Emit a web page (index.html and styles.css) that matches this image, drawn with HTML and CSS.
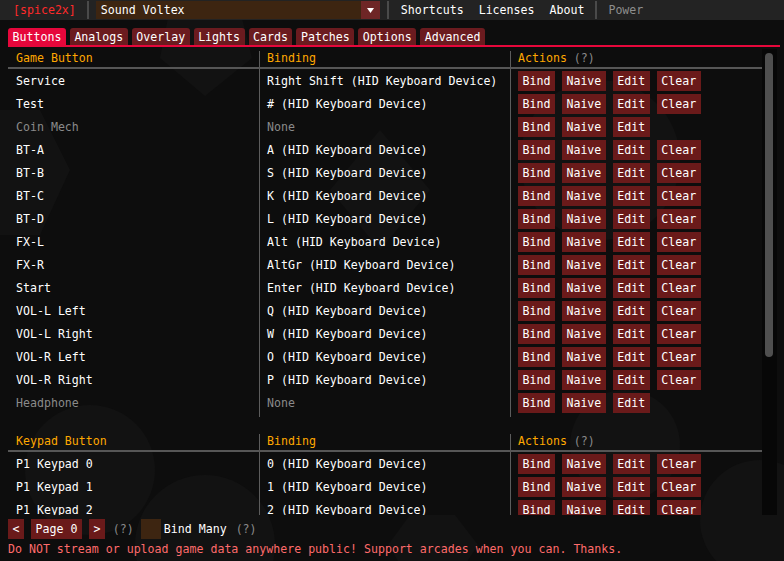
FILE: index.html
```html
<!DOCTYPE html>
<html>
<head>
<meta charset="utf-8">
<link rel="stylesheet" href="styles.css">
</head>
<body>
<svg class="backdrop" width="784" height="561" viewBox="0 0 784 561" aria-hidden="true">
  <polygon points="168,18 242,18 252,58 205,96 160,58" />
  <polygon points="-20,110 40,110 70,170 40,235 -20,235" />
  <polygon points="380,130 430,190 380,250 330,190" />
  <circle cx="600" cy="160" r="80" />
  <circle cx="90" cy="470" r="65" />
  <circle cx="205" cy="545" r="70" />
  <polygon points="410,515 455,515 478,545 455,580 410,580 388,545" />
  <circle cx="625" cy="445" r="55" />
  <circle cx="760" cy="520" r="60" />
</svg>

<div class="app">
  <div class="menubar">
    <span class="brand">[spice2x]</span>
    <span class="msep"></span>
    <div class="combo">
      <span class="combo-text">Sound Voltex</span>
      <span class="combo-arrow"><svg width="7" height="5" viewBox="0 0 7 5"><polygon points="0,0 7,0 3.5,5" fill="#fff"/></svg></span>
    </div>
    <span class="msep sep-right"></span>
    <span class="mitem first">Shortcuts</span>
    <span class="mitem">Licenses</span>
    <span class="mitem">About</span>
    <span class="msep sep-power"></span>
    <span class="mitem dim">Power</span>
  </div>

  <div class="tabs">
    <span class="tab active">Buttons</span>
    <span class="tab">Analogs</span>
    <span class="tab">Overlay</span>
    <span class="tab">Lights</span>
    <span class="tab">Cards</span>
    <span class="tab">Patches</span>
    <span class="tab">Options</span>
    <span class="tab">Advanced</span>
  </div>
  <div class="tabline"></div>

  <div class="scroll-area">
    <div class="scroll-content">
      <div class="table">
        <div class="hcell">Game Button</div>
        <div class="hcell">Binding</div>
        <div class="hcell">Actions <span class="dim">(?)</span></div>

        <div class="cell">Service</div><div class="cell">Right Shift (HID Keyboard Device)</div>
        <div class="cell acts"><span class="btn">Bind</span><span class="btn">Naive</span><span class="btn">Edit</span><span class="btn">Clear</span></div>

        <div class="cell">Test</div><div class="cell"># (HID Keyboard Device)</div>
        <div class="cell acts"><span class="btn">Bind</span><span class="btn">Naive</span><span class="btn">Edit</span><span class="btn">Clear</span></div>

        <div class="cell dim">Coin Mech</div><div class="cell dim">None</div>
        <div class="cell acts"><span class="btn">Bind</span><span class="btn">Naive</span><span class="btn">Edit</span></div>

        <div class="cell">BT-A</div><div class="cell">A (HID Keyboard Device)</div>
        <div class="cell acts"><span class="btn">Bind</span><span class="btn">Naive</span><span class="btn">Edit</span><span class="btn">Clear</span></div>

        <div class="cell">BT-B</div><div class="cell">S (HID Keyboard Device)</div>
        <div class="cell acts"><span class="btn">Bind</span><span class="btn">Naive</span><span class="btn">Edit</span><span class="btn">Clear</span></div>

        <div class="cell">BT-C</div><div class="cell">K (HID Keyboard Device)</div>
        <div class="cell acts"><span class="btn">Bind</span><span class="btn">Naive</span><span class="btn">Edit</span><span class="btn">Clear</span></div>

        <div class="cell">BT-D</div><div class="cell">L (HID Keyboard Device)</div>
        <div class="cell acts"><span class="btn">Bind</span><span class="btn">Naive</span><span class="btn">Edit</span><span class="btn">Clear</span></div>

        <div class="cell">FX-L</div><div class="cell">Alt (HID Keyboard Device)</div>
        <div class="cell acts"><span class="btn">Bind</span><span class="btn">Naive</span><span class="btn">Edit</span><span class="btn">Clear</span></div>

        <div class="cell">FX-R</div><div class="cell">AltGr (HID Keyboard Device)</div>
        <div class="cell acts"><span class="btn">Bind</span><span class="btn">Naive</span><span class="btn">Edit</span><span class="btn">Clear</span></div>

        <div class="cell">Start</div><div class="cell">Enter (HID Keyboard Device)</div>
        <div class="cell acts"><span class="btn">Bind</span><span class="btn">Naive</span><span class="btn">Edit</span><span class="btn">Clear</span></div>

        <div class="cell">VOL-L Left</div><div class="cell">Q (HID Keyboard Device)</div>
        <div class="cell acts"><span class="btn">Bind</span><span class="btn">Naive</span><span class="btn">Edit</span><span class="btn">Clear</span></div>

        <div class="cell">VOL-L Right</div><div class="cell">W (HID Keyboard Device)</div>
        <div class="cell acts"><span class="btn">Bind</span><span class="btn">Naive</span><span class="btn">Edit</span><span class="btn">Clear</span></div>

        <div class="cell">VOL-R Left</div><div class="cell">O (HID Keyboard Device)</div>
        <div class="cell acts"><span class="btn">Bind</span><span class="btn">Naive</span><span class="btn">Edit</span><span class="btn">Clear</span></div>

        <div class="cell">VOL-R Right</div><div class="cell">P (HID Keyboard Device)</div>
        <div class="cell acts"><span class="btn">Bind</span><span class="btn">Naive</span><span class="btn">Edit</span><span class="btn">Clear</span></div>

        <div class="cell dim">Headphone</div><div class="cell dim">None</div>
        <div class="cell acts"><span class="btn">Bind</span><span class="btn">Naive</span><span class="btn">Edit</span></div>
      </div>

      <div class="table">
        <div class="hcell">Keypad Button</div>
        <div class="hcell">Binding</div>
        <div class="hcell">Actions <span class="dim">(?)</span></div>

        <div class="cell">P1 Keypad 0</div><div class="cell">0 (HID Keyboard Device)</div>
        <div class="cell acts"><span class="btn">Bind</span><span class="btn">Naive</span><span class="btn">Edit</span><span class="btn">Clear</span></div>

        <div class="cell">P1 Keypad 1</div><div class="cell">1 (HID Keyboard Device)</div>
        <div class="cell acts"><span class="btn">Bind</span><span class="btn">Naive</span><span class="btn">Edit</span><span class="btn">Clear</span></div>

        <div class="cell">P1 Keypad 2</div><div class="cell">2 (HID Keyboard Device)</div>
        <div class="cell acts"><span class="btn">Bind</span><span class="btn">Naive</span><span class="btn">Edit</span><span class="btn">Clear</span></div>
      </div>
    </div>
    <div class="scrollbar"><div class="thumb"></div></div>
  </div>

  <div class="pager">
    <span class="btn">&lt;</span>
    <span class="btn">Page 0</span>
    <span class="btn">&gt;</span>
    <span class="dim help">(?)</span>
    <span class="checkbox"></span>
    <span class="cb-label">Bind Many</span>
    <span class="dim help2">(?)</span>
  </div>
  <div class="warning">Do NOT stream or upload game data anywhere public! Support arcades when you can. Thanks.</div>
</div>
</body>
</html>
```

FILE: styles.css
```css
html, body {
  margin: 0;
  padding: 0;
  background: #0d0d0d;
  width: 784px;
  height: 561px;
  overflow: hidden;
}

body {
  position: relative;
  font-family: "DejaVu Sans Mono", "Liberation Mono", monospace;
  font-size: 11.6px;
  line-height: 13px;
  color: #ffffff;
}

.backdrop {
  position: absolute;
  left: 0;
  top: 0;
  z-index: 0;
  fill: #121212;
}

.app {
  position: relative;
  z-index: 1;
  display: flex;
  flex-direction: column;
  height: 561px;
}

.dim { color: #8a8a8a; }

/* menu bar */
.menubar {
  height: 20px;
  background: #232323;
  display: flex;
  align-items: center;
  padding-left: 13px;
  white-space: pre;
}
.brand { color: #ff2a2a; margin-right: 11px; }
.msep {
  width: 2px;
  height: 18px;
  background: #4a4a4a;
}
.combo {
  margin-left: 7px;
  width: 284px;
  height: 18px;
  background: #3d2511;
  display: flex;
  align-items: center;
  justify-content: space-between;
}
.combo-text { padding-left: 5px; }
.combo-arrow {
  width: 19px;
  height: 18px;
  background: #6e2626;
  display: flex;
  align-items: center;
  justify-content: center;
}
.sep-right { margin-left: 7px; }
.mitem { margin-left: 15px; }
.mitem.first { margin-left: 12px; }
.sep-power { margin-left: 11px; }
.mitem.dim { margin-left: 11px; color: #8e8e8e; }

/* tabs */
.tabs {
  margin-top: 8px;
  padding-left: 8px;
  display: flex;
  gap: 4px;
  height: 17px;
}
.tab {
  background: #6b1b1f;
  padding: 0 4.5px;
  line-height: 18px;
  border-radius: 3px 3px 0 0;
  white-space: pre;
}
.tab.active { background: #e6073b; }
.tabline {
  margin-left: 8px;
  width: 772px;
  height: 2px;
  background: #e6073b;
}

/* scroll area */
.scroll-area {
  margin-left: 8px;
  margin-top: 2px;
  width: 769px;
  height: 466px;
  display: flex;
  overflow: hidden;
}
.scroll-content {
  width: 754px;
  padding-top: 2px;
  display: flex;
  flex-direction: column;
  gap: 17px;
}
.scrollbar {
  width: 15px;
  height: 466px;
  background: #070707;
  padding: 4px 4px 0 3px;
  box-sizing: border-box;
}
.thumb {
  width: 8px;
  height: 304px;
  background: #4f4f4f;
  border-radius: 4px;
}

.table {
  display: grid;
  grid-template-columns: 251px 251px 252px;
  padding-bottom: 3px;
  flex-shrink: 0;
  background:
    linear-gradient(#5c5c5c, #5c5c5c) 251px 0 / 1px 100% no-repeat,
    linear-gradient(#5c5c5c, #5c5c5c) 502px 0 / 1px 100% no-repeat;
}
.hcell {
  height: 16px;
  line-height: 14px;
  border-bottom: 2px solid #565656;
  color: #ffa800;
  padding-left: 8px;
  white-space: pre;
}
.cell {
  height: 21px;
  padding-top: 2px;
  line-height: 20px;
  padding-left: 8px;
  white-space: pre;
}
.cell.dim { color: #8a8a8a; }
.acts {
  display: flex;
  gap: 7px;
  align-items: flex-start;
}
.btn {
  display: inline-block;
  height: 20px;
  line-height: 20px;
  padding: 0 4.5px;
  background: #6a1a1a;
  white-space: pre;
}

/* pager */
.pager {
  margin-top: 4px;
  padding-left: 8px;
  display: flex;
  align-items: center;
  gap: 7px;
  height: 20px;
  white-space: pre;
}
.help { margin-left: 1px; }
.checkbox {
  width: 20px;
  height: 20px;
  background: #3d2511;
}
.cb-label { margin-left: -4px; }
.help2 { margin-left: 2px; }

.warning {
  margin-top: 4px;
  padding-left: 8px;
  color: #ff6b6b;
  line-height: 13px;
  white-space: pre;
}
```
